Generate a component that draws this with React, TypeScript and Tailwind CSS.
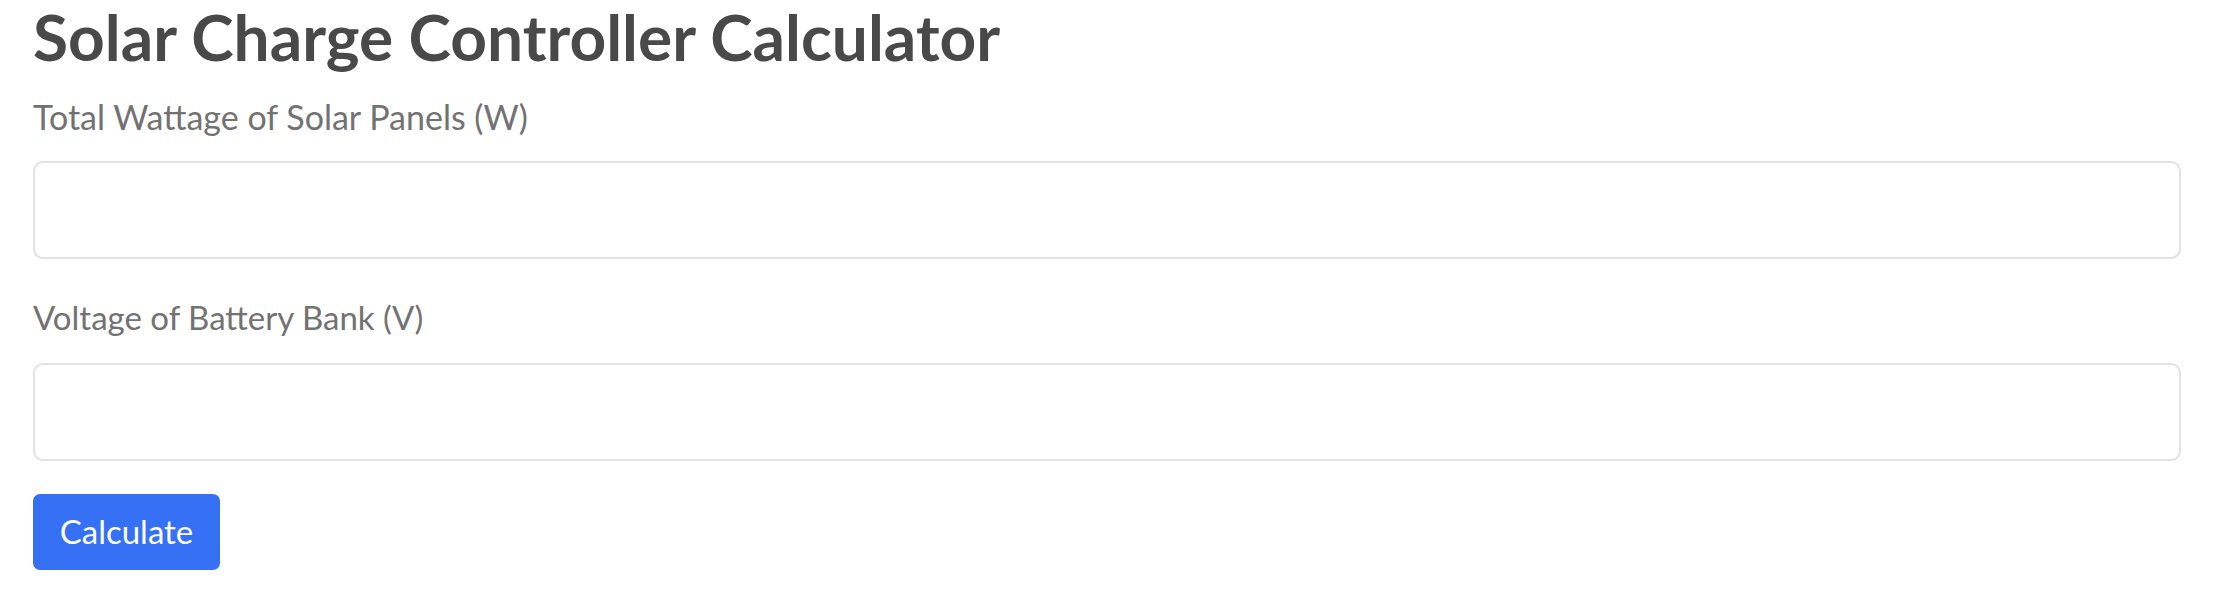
export default function App() {
  return (
    <div className="min-h-[600px] bg-white px-[33px]" style={{ fontFamily: "Lato, 'Noto Sans', sans-serif" }}>
      <h1 className="text-[64px] leading-[74px] font-bold text-[#494949]">Solar Charge Controller Calculator</h1>

      <label className="mt-[23px] block text-[34px] leading-[40px] text-[#727272]">Total Wattage of Solar Panels (W)</label>
      <input type="number" className="mt-[24px] block h-[98px] w-full rounded-[10px] border-2 border-[#e0e2e6] px-4 outline-none" />

      <label className="mt-[38px] block text-[33px] leading-[40px] text-[#727272]">Voltage of Battery Bank (V)</label>
      <input type="number" className="mt-[26px] block h-[98px] w-full rounded-[10px] border-2 border-[#e0e2e6] px-4 outline-none" />

      <button className="mt-[33px] flex h-[76px] w-[187px] items-center justify-center rounded-[7px] bg-[#3570f5] text-[33px] text-white">
        Calculate
      </button>
    </div>
  );
}
